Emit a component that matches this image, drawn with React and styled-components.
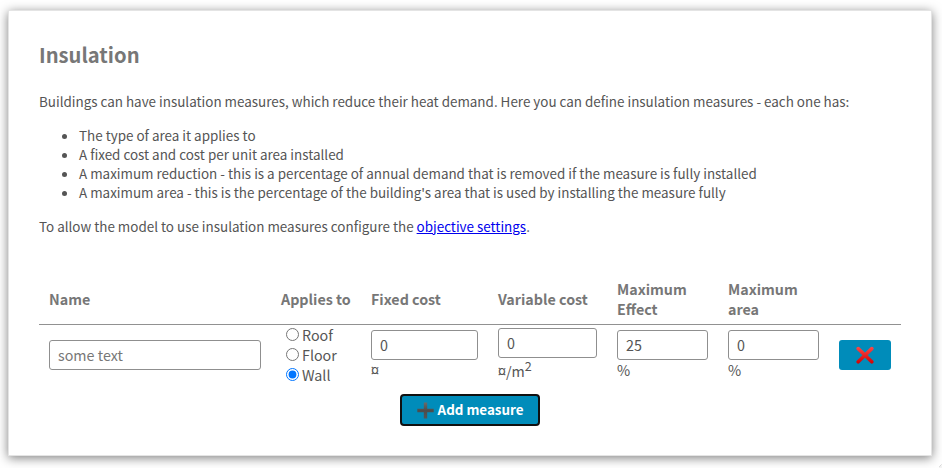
import React from "react";
import styled, { createGlobalStyle } from "styled-components";

const GlobalStyle = createGlobalStyle`
  body {
    margin: 0;
    background: #fff;
    color: #555;
    font-family: "Noto Sans CJK SC", "Noto Sans", sans-serif;
    font-size: 13.43px;
    line-height: 19px;
    overflow: hidden;
  }
`;

const Page = styled.div`
  box-sizing: border-box;
  position: relative;
  width: 942px;
  height: 468px;
  padding: 10px 10px 12px 8px;
  overflow: hidden;
`;

const Card = styled.section`
  box-sizing: border-box;
  width: 924px;
  height: 446px;
  padding: 29px 30px 0;
  border: 1px solid #e4e4e4;
  background: #fff;
  box-shadow: 0 2px 10px rgba(0, 0, 0, 0.5);
`;

const Title = styled.h1`
  margin: 0 0 23px;
  color: #777;
  font-size: 20.2px;
  line-height: 29px;
  font-weight: 700;
`;

const Paragraph = styled.p`
  margin: 0;
  white-space: nowrap;
`;

const Points = styled.ul`
  margin: 15px 0;
  padding-left: 40px;
  white-space: nowrap;
`;

const Link = styled.a`
  color: #0000ee;
  text-decoration: underline;
`;

const Grid = styled.div`
  display: grid;
  grid-template-columns: 232px 90px 127px 119px 111px 111px 72px;
  width: 862px;
  font-size: 14.3px;
  line-height: 20px;
`;

const HeaderGrid = styled(Grid)`
  box-sizing: border-box;
  margin-top: 39px;
  height: 50px;
  padding-bottom: 2px;
  align-items: center;
  border-bottom: 1px solid #919191;
  color: #777;
  font-weight: 700;
`;

const HeaderCell = styled.div`
  padding-left: 10px;
  padding-right: ${(p) => (p.$wrap ? "20px" : "0")};
  white-space: ${(p) => (p.$wrap ? "normal" : "nowrap")};
`;

const RowGrid = styled(Grid)`
  height: 60px;
  align-items: center;
`;

const Cell = styled.div`
  padding: 0 10px;
`;

const Field = styled.input`
  display: block;
  box-sizing: border-box;
  width: 100%;
  height: 30px;
  margin: 0;
  padding: 0 8px 1px;
  border: 1px solid #8f8f8f;
  border-radius: 3px;
  background: #fff;
  color: #555;
  font: inherit;
  outline: none;

  &::placeholder {
    color: #777;
    opacity: 1;
  }
`;

const Unit = styled.div`
  height: ${(p) => (p.$raised ? "24px" : "20px")};
  line-height: ${(p) => (p.$raised ? "26px" : "20px")};

  sup {
    font-size: 12.6px;
    line-height: 0;
    vertical-align: 6px;
  }
`;

const Option = styled.label`
  display: flex;
  align-items: flex-start;
  height: 20px;
`;

const Radio = styled.input`
  width: 13px;
  height: 13px;
  margin: 3px 3px 0 5px;
`;

const Button = styled.button`
  display: flex;
  box-sizing: border-box;
  align-items: center;
  justify-content: center;
  padding: 0;
  border: 0;
  border-radius: 3px;
  background: #008cba;
  color: #fff;
  font: inherit;
  font-weight: 700;
`;

const DeleteButton = styled(Button)`
  width: 52px;
  height: 30px;
`;

const AddButton = styled(Button)`
  width: 140px;
  height: 32px;
  gap: 4px;
  padding-bottom: 2px;
  border: 2px solid #101010;
  border-radius: 4px;
  font-size: 13.4px;

  svg {
    margin-top: 2px;
  }
`;

const Actions = styled.div`
  display: flex;
  justify-content: center;
  width: 862px;
  margin-top: 9px;
`;

const Grip = styled.svg`
  position: absolute;
  right: 0;
  bottom: 0;
`;

const columns = ["Name", "Applies to", "Fixed cost", "Variable cost", "Maximum Effect", "Maximum area", ""];

function CrossIcon() {
  return (
    <svg width="18" height="18" viewBox="0 0 18 18">
      <defs>
        <linearGradient id="cross" gradientUnits="userSpaceOnUse" x1="0" y1="0" x2="0" y2="18">
          <stop offset="0" stopColor="#ff4b4b" />
          <stop offset="1" stopColor="#d00000" />
        </linearGradient>
      </defs>
      <path
        d="M2.2 2.6 15.8 15.8M15.8 2.6 2.2 15.8"
        stroke="url(#cross)"
        strokeWidth="3.6"
        strokeLinecap="round"
        fill="none"
      />
    </svg>
  );
}

function PlusIcon() {
  return (
    <svg width="17" height="17" viewBox="0 0 17 17">
      <defs>
        <linearGradient id="plus" x1="0" y1="0" x2="0" y2="1">
          <stop offset="0" stopColor="#6b6b6b" />
          <stop offset="0.5" stopColor="#4c4c4c" />
          <stop offset="1" stopColor="#555" />
        </linearGradient>
      </defs>
      <path d="M6.8 .5H10.2V6.8H16.7V10.2H10.2V16.5H6.8V10.2H.3V6.8H6.8Z" fill="url(#plus)" />
    </svg>
  );
}

export default function App() {
  return (
    <>
      <GlobalStyle />
      <Page>
        <Card>
          <Title>Insulation</Title>
          <Paragraph>
            Buildings can have insulation measures, which reduce their heat demand. Here you can define insulation
            measures - each one has:
          </Paragraph>
          <Points>
            <li>The type of area it applies to</li>
            <li>A fixed cost and cost per unit area installed</li>
            <li>
              A maximum reduction - this is a percentage of annual demand that is removed if the measure is fully
              installed
            </li>
            <li>
              A maximum area - this is the percentage of the building's area that is used by installing the measure
              fully
            </li>
          </Points>
          <Paragraph>
            To allow the model to use insulation measures configure the <Link href="#">objective settings</Link>.
          </Paragraph>
          <HeaderGrid>
            {columns.map((name, i) => (
              <HeaderCell key={i} $wrap={i > 3}>
                {name}
              </HeaderCell>
            ))}
          </HeaderGrid>
          <RowGrid>
            <Cell>
              <Field placeholder="some text" />
            </Cell>
            <Cell>
              {["Roof", "Floor", "Wall"].map((name) => (
                <Option key={name}>
                  <Radio type="radio" name="surface" defaultChecked={name === "Wall"} />
                  {name}
                </Option>
              ))}
            </Cell>
            <Cell>
              <Field defaultValue="0" />
              <Unit>¤</Unit>
            </Cell>
            <Cell>
              <Field defaultValue="0" />
              <Unit $raised>
                ¤/m<sup>2</sup>
              </Unit>
            </Cell>
            <Cell>
              <Field defaultValue="25" />
              <Unit>%</Unit>
            </Cell>
            <Cell>
              <Field defaultValue="0" />
              <Unit>%</Unit>
            </Cell>
            <Cell>
              <DeleteButton aria-label="Delete">
                <CrossIcon />
              </DeleteButton>
            </Cell>
          </RowGrid>
          <Actions>
            <AddButton>
              <PlusIcon />
              Add measure
            </AddButton>
          </Actions>
        </Card>
        <Grip width="3" height="4" viewBox="0 0 3 4">
          <path d="M0 3.5 2.5 .5M2 3.5 3 2.5" stroke="#bbb" strokeWidth="0.7" fill="none" />
        </Grip>
      </Page>
    </>
  );
}
